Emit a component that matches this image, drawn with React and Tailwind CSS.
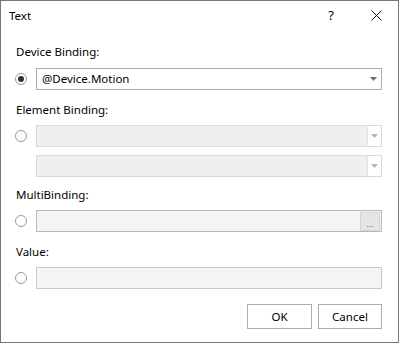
import React from 'react';

const font = { fontFamily: '"Noto Sans", "Open Sans", sans-serif' };

function Radio({ checked }) {
  return (
    <span className="w-[12px] h-[12px] rounded-full border border-[#9a9a9a] bg-white flex items-center justify-center flex-shrink-0">
      {checked && <span className="w-[6px] h-[6px] rounded-full bg-[#333]" />}
    </span>
  );
}

function Arrow({ color }) {
  return (
    <svg width="7" height="4" viewBox="0 0 7 4">
      <path d="M0 0 L7 0 L3.5 4 Z" fill={color} />
    </svg>
  );
}

function Row({ children, radio, checked, className = '' }) {
  return (
    <div className={`flex items-center gap-[9px] ${className}`}>
      {radio ? <Radio checked={checked} /> : <span className="w-[12px] flex-shrink-0" />}
      {children}
    </div>
  );
}

function Label({ children, className = '' }) {
  return <div className={`h-4 leading-4 text-[11.5px] text-black ${className}`}>{children}</div>;
}

export default function App() {
  return (
    <div className="w-[400px] h-[344px] bg-white text-[11.5px]" style={font}>
      <div className="w-[399px] h-[343px] border border-[#777] bg-white flex flex-col">
        <div className="h-[29px] flex items-center pl-[8px] pr-[16px] text-black">
          <span className="flex-1">Text</span>
          <span className="mr-[37px] text-[13px]">?</span>
          <svg width="11" height="11" viewBox="0 0 11 11">
            <path d="M0.5 0.5 L10.5 10.5 M10.5 0.5 L0.5 10.5" stroke="#111" strokeWidth="1" />
          </svg>
        </div>

        <div className="flex flex-col pl-[14px] pr-[15px]">
          <Label className="mt-[14px] pl-px">Device Binding:</Label>
          <Row radio checked className="mt-2">
            <div className="w-[346px] h-[22px] border border-[#acacac] bg-white flex items-center pl-[5px] pr-[4px] text-black">
              <span className="flex-1">@Device.Motion</span>
              <Arrow color="#707070" />
            </div>
          </Row>

          <Label className="mt-3 pl-px">Element Binding:</Label>
          <Row radio className="mt-[7px]">
            <div className="w-[346px] h-[22px] border border-[#dadada] bg-[#efefef] flex">
              <span className="flex-1" />
              <span className="w-[14px] bg-white border-l border-[#e2e2e2] flex items-center justify-center">
                <Arrow color="#b5b5b5" />
              </span>
            </div>
          </Row>
          <Row className="mt-[8px]">
            <div className="w-[346px] h-[22px] border border-[#dadada] bg-[#efefef] flex">
              <span className="flex-1" />
              <span className="w-[14px] bg-white border-l border-[#e2e2e2] flex items-center justify-center">
                <Arrow color="#b5b5b5" />
              </span>
            </div>
          </Row>

          <Label className="mt-[10px] pl-px">MultiBinding:</Label>
          <Row radio className="mt-[7px]">
            <div className="w-[346px] h-[22px] border border-[#b9b9b9] bg-[#f4f4f4] flex items-center justify-end pr-px">
              <span className="w-[20px] h-[19px] bg-[#e5e5e5] border border-[#d6d6d6] flex items-end justify-center pb-[2px] text-[9px] leading-none text-[#6b6b9b]">
                ...
              </span>
            </div>
          </Row>

          <Label className="mt-3 pl-px">Value:</Label>
          <Row radio className="mt-[7px]">
            <div className="w-[346px] h-[22px] border border-[#c8c8c8] bg-[#f4f4f4]" />
          </Row>

          <div className="mt-[15px] flex justify-end gap-[6px] pr-px">
            <button className="w-[65px] h-[25px] border border-[#adadad] bg-white text-black">OK</button>
            <button className="w-[64px] h-[25px] border border-[#adadad] bg-white text-black">Cancel</button>
          </div>
        </div>
      </div>
    </div>
  );
}
